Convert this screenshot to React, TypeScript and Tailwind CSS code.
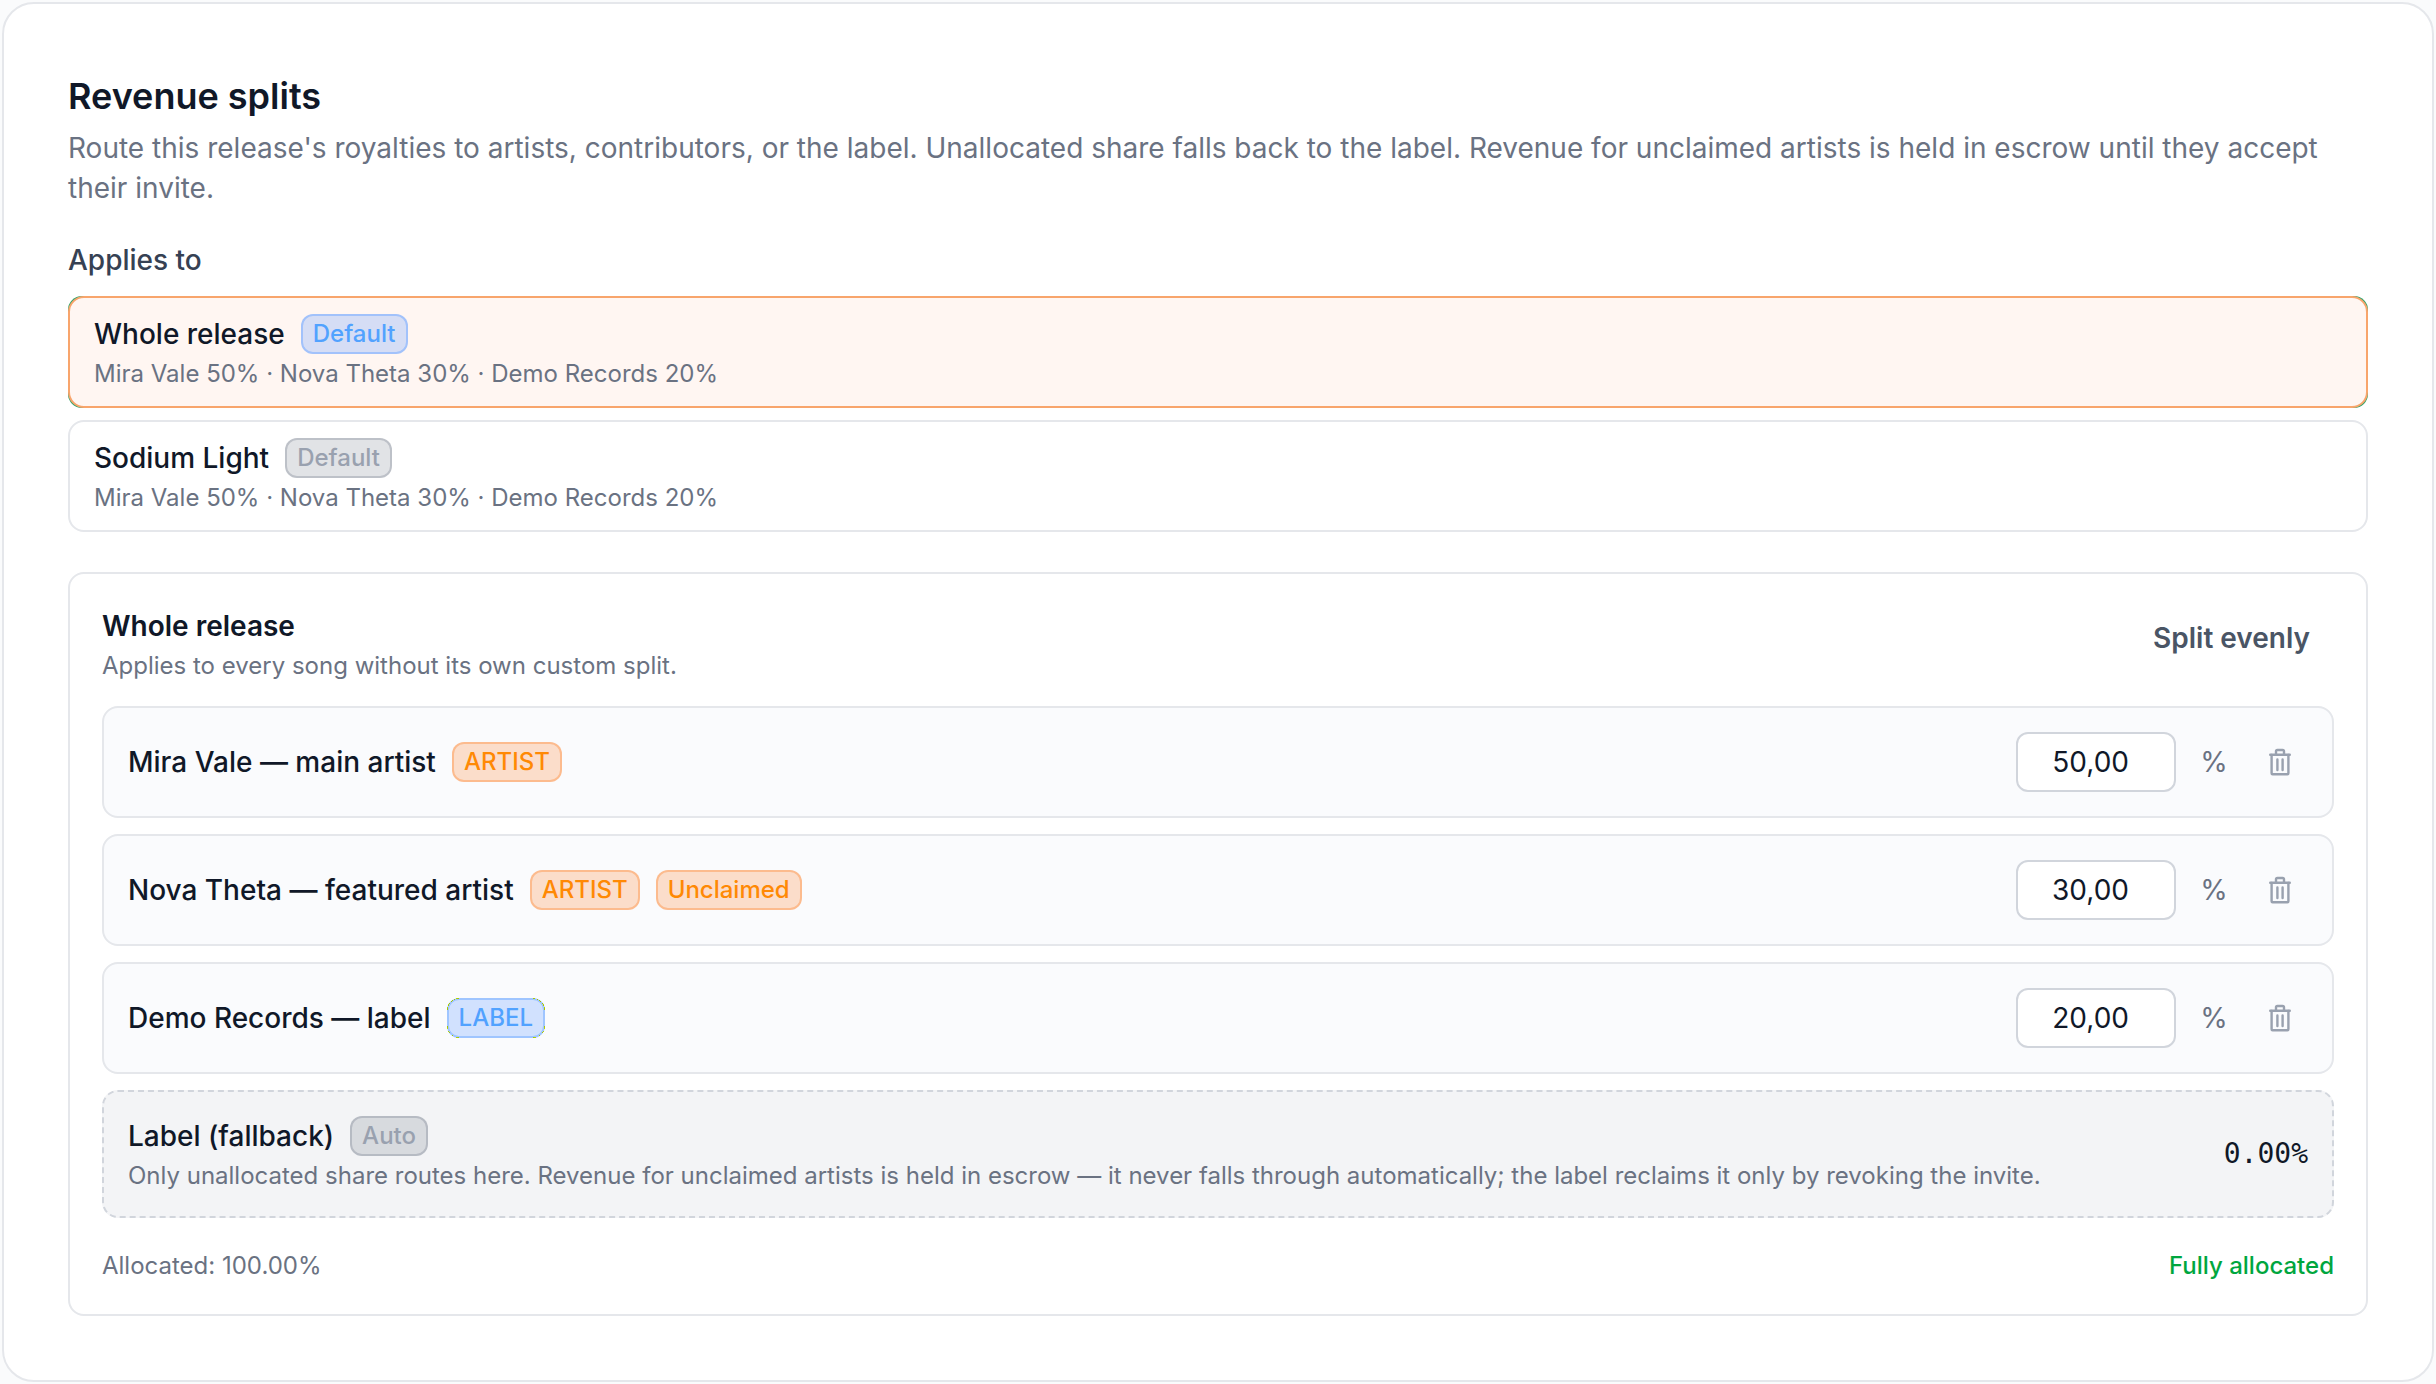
import React, { useState } from 'react';

type Tone = 'blue' | 'orange' | 'gray';

interface Recipient {
  id: string;
  name: string;
  share: string;
  badges: { text: string; tone: Tone }[];
}

const BADGE_TONES: Record<Tone, string> = {
  blue: 'bg-blue-500/20 border-blue-500/30 text-[#51a2ff]',
  orange: 'bg-[#ff6900]/20 border-[#ff6900]/30 text-[#ff8904]',
  gray: 'bg-[#6b7280]/20 border-[#6b7280]/30 text-[#99a1af]',
};

const SCOPES = [
  { id: 'release', title: 'Whole release', summary: 'Mira Vale 50% · Nova Theta 30% · Demo Records 20%' },
  { id: 'sodium', title: 'Sodium Light', summary: 'Mira Vale 50% · Nova Theta 30% · Demo Records 20%' },
];

const RECIPIENTS: Recipient[] = [
  { id: 'mira', name: 'Mira Vale — main artist', share: '50,00', badges: [{ text: 'ARTIST', tone: 'orange' }] },
  {
    id: 'nova',
    name: 'Nova Theta — featured artist',
    share: '30,00',
    badges: [{ text: 'ARTIST', tone: 'orange' }, { text: 'Unclaimed', tone: 'orange' }],
  },
  { id: 'demo', name: 'Demo Records — label', share: '20,00', badges: [{ text: 'LABEL', tone: 'blue' }] },
];

function Badge({ tone, children }: { tone: Tone; children: React.ReactNode }) {
  return (
    <span className={`inline-flex h-10 items-center rounded-xl border-2 px-2.5 text-[24px] leading-8 font-medium ${BADGE_TONES[tone]}`}>
      {children}
    </span>
  );
}

function TrashIcon() {
  return (
    <svg viewBox="0 0 28 28" className="size-7" fill="none" stroke="currentColor" strokeWidth="2.4" strokeLinecap="round" strokeLinejoin="round" aria-hidden="true">
      <path d="M4.2 6.8h19.6" />
      <path d="M5.6 7v18.2a1 1 0 0 0 1 1h14.8a1 1 0 0 0 1-1V7" />
      <path d="M10 6.8V3.4a1.4 1.4 0 0 1 1.4-1.4h5.2a1.4 1.4 0 0 1 1.4 1.4v3.4" />
      <path d="M11.4 11.4v10.6M16.6 11.4v10.6" />
    </svg>
  );
}

export default function App() {
  const [scope, setScope] = useState('release');
  const [recipients, setRecipients] = useState(RECIPIENTS);

  const setShare = (id: string, share: string) =>
    setRecipients((prev) => prev.map((r) => (r.id === id ? { ...r, share } : r)));

  return (
    <main className="bg-[#fafbfc] p-0.5 font-['Inter',sans-serif] text-[28px] leading-10 text-gray-900">
      <section className="rounded-4xl border-2 border-gray-200 bg-white p-16">
        <h2 className="text-[36px] leading-14 font-semibold">Revenue splits</h2>
        <p className="mt-1 text-gray-500">
          Route this release's royalties to artists, contributors, or the label. Unallocated share falls back to the
          label. Revenue for unclaimed artists is held in escrow until they accept their invite.
        </p>

        {/* Scope picker */}
        <h3 className="mt-8 font-medium text-gray-700">Applies to</h3>
        <div className="mt-4 flex flex-col gap-3">
          {SCOPES.map((s) => (
            // the green backing only shows as a thin edge on the selected corners
            <div key={s.id} className={`flex rounded-[14px] ${scope === s.id ? 'bg-[#2fa36b]' : ''}`}>
              <button
                type="button"
                aria-pressed={scope === s.id}
                onClick={() => setScope(s.id)}
                className={`flex-1 rounded-2xl border-2 px-6 py-4 text-left ${
                  scope === s.id ? 'border-[#f8a56c] bg-[#fff6f2]' : 'border-gray-200 bg-white'
                }`}
              >
                <span className="flex items-center gap-4">
                  <span className="font-medium">{s.title}</span>
                  <Badge tone={scope === s.id ? 'blue' : 'gray'}>Default</Badge>
                </span>
                <span className="mt-1 block text-[24px] leading-8 text-gray-500">{s.summary}</span>
              </button>
            </div>
          ))}
        </div>

        {/* Split editor */}
        <div className="mt-10 rounded-2xl border-2 border-gray-200 p-8">
          <div className="flex items-start justify-between">
            <div>
              <h3 className="font-semibold">Whole release</h3>
              <p className="mt-1 text-[24px] leading-8 text-gray-500">Applies to every song without its own custom split.</p>
            </div>
            <button type="button" className="h-16 px-6 font-semibold text-gray-600">
              Split evenly
            </button>
          </div>

          <div className="mt-6 flex flex-col gap-4">
            {recipients.map((r) => (
              <div key={r.id} className="flex items-center justify-between rounded-2xl border-2 border-gray-200 bg-[#fafbfd] p-6">
                <div className="flex items-center gap-4">
                  <label htmlFor={`share-${r.id}`} className="font-medium">{r.name}</label>
                  {r.badges.map((b) => (
                    <Badge key={b.text} tone={b.tone}>{b.text}</Badge>
                  ))}
                </div>
                <div className="flex items-center gap-6">
                  <input
                    id={`share-${r.id}`}
                    inputMode="decimal"
                    value={r.share}
                    onChange={(e) => setShare(r.id, e.target.value)}
                    className="h-15 w-40 rounded-xl border-2 border-gray-300 bg-white pr-[45px] text-right outline-none"
                  />
                  <span className="w-7 text-center text-gray-500">%</span>
                  <button
                    type="button"
                    aria-label={`Remove ${r.name}`}
                    onClick={() => setRecipients((prev) => prev.filter((x) => x.id !== r.id))}
                    className="flex size-14 items-center justify-center text-gray-400"
                  >
                    <TrashIcon />
                  </button>
                </div>
              </div>
            ))}

            <div className="flex items-center justify-between rounded-2xl border-2 border-dashed border-gray-300 bg-gray-100 p-6">
              <div>
                <div className="flex items-center gap-4">
                  <span className="font-medium">Label (fallback)</span>
                  <Badge tone="gray">Auto</Badge>
                </div>
                <p className="mt-1 text-[24px] leading-8 text-gray-500">
                  Only unallocated share routes here. Revenue for unclaimed artists is held in escrow — it never falls
                  through automatically; the label reclaims it only by revoking the invite.
                </p>
              </div>
              <span className="font-['DejaVu_Sans_Mono',monospace] font-medium">0.00%</span>
            </div>
          </div>

          <div className="mt-8 flex items-center justify-between text-[24px] leading-8">
            <span className="text-gray-500">Allocated: 100.00%</span>
            <span className="font-medium text-green-600">Fully allocated</span>
          </div>
        </div>
      </section>
    </main>
  );
}
